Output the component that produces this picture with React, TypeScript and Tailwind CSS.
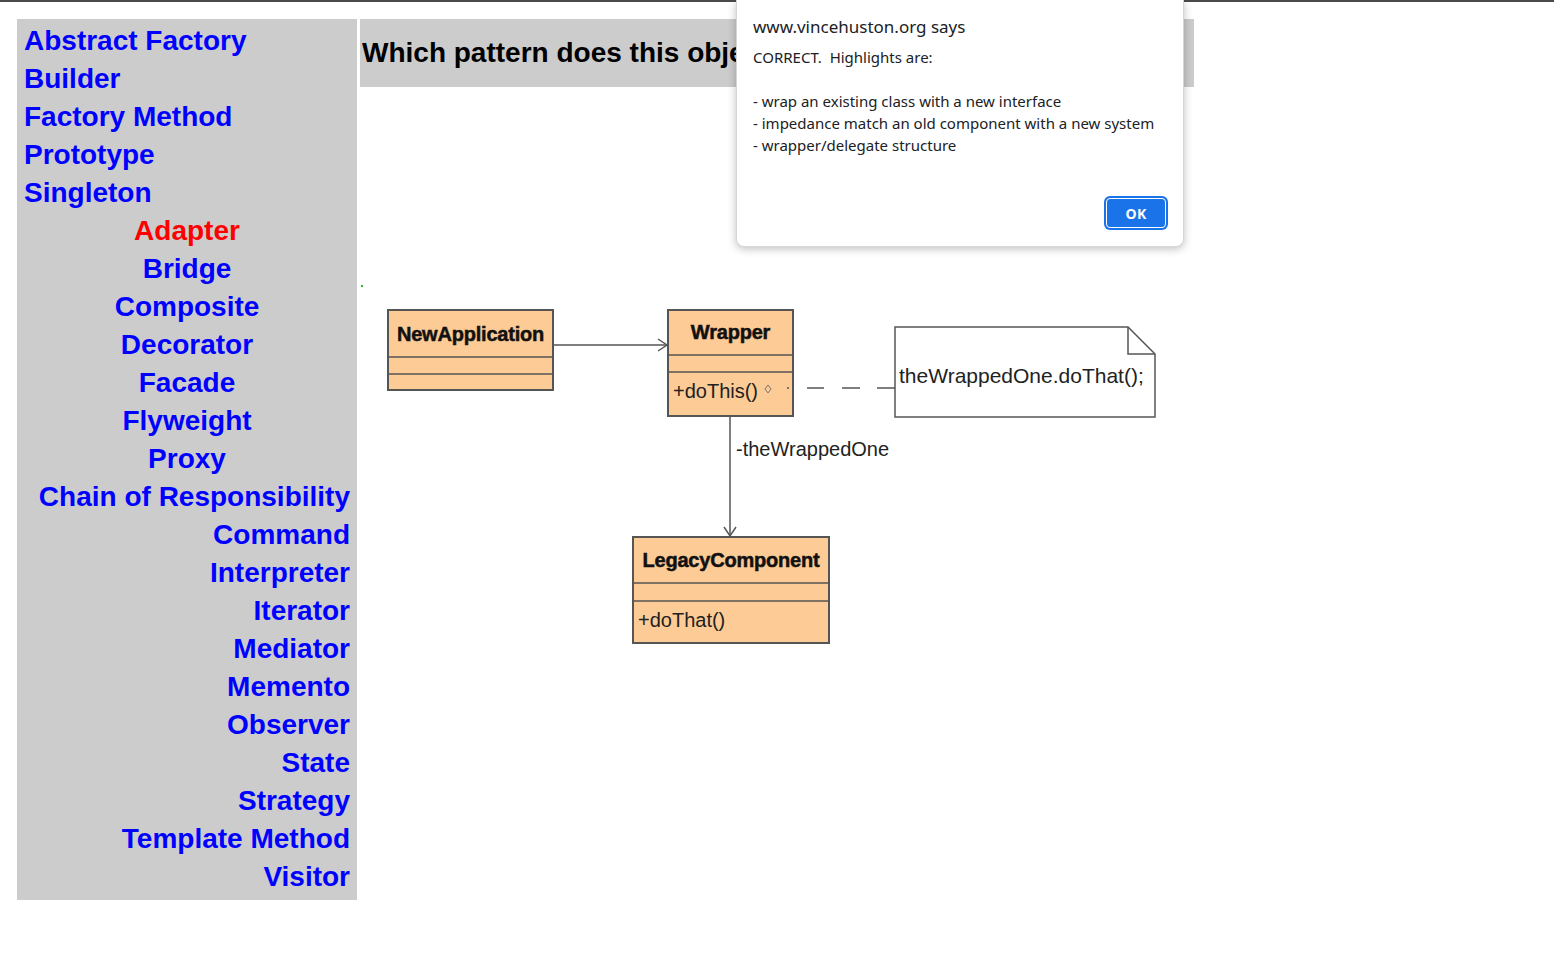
import React from "react";

const creational = ["Abstract Factory", "Builder", "Factory Method", "Prototype", "Singleton"];
const structural = ["Adapter", "Bridge", "Composite", "Decorator", "Facade", "Flyweight", "Proxy"];
const behavioral = [
  "Chain of Responsibility",
  "Command",
  "Interpreter",
  "Iterator",
  "Mediator",
  "Memento",
  "Observer",
  "State",
  "Strategy",
  "Template Method",
  "Visitor",
];

function Sidebar() {
  return (
    <nav className="w-[340px] shrink-0 bg-[#cccccc] px-[7px] pt-[3px] pb-[4px] text-[28px] font-bold leading-[38px]">
      {creational.map((name) => (
        <a key={name} href="#" className="block text-left text-[#0000ff]">
          {name}
        </a>
      ))}
      {structural.map((name) => (
        <a
          key={name}
          href="#"
          className={name === "Adapter" ? "block text-center text-[#ff0000]" : "block text-center text-[#0000ff]"}
        >
          {name}
        </a>
      ))}
      {behavioral.map((name) => (
        <a key={name} href="#" className="block text-right text-[#0000ff]">
          {name}
        </a>
      ))}
    </nav>
  );
}

function ClassBox({
  x,
  y,
  w,
  head,
  mid,
  bottom,
  name,
  method,
}: {
  x: number;
  y: number;
  w: number;
  head: number;
  mid: number;
  bottom: number;
  name: string;
  method?: string;
}) {
  return (
    <g>
      <rect x={x} y={y} width={w} height={bottom - y} fill="#fdcb95" stroke="#555" strokeWidth="2" />
      <line x1={x} y1={head} x2={x + w} y2={head} stroke="#555" strokeWidth="1.5" />
      <line x1={x} y1={mid} x2={x + w} y2={mid} stroke="#555" strokeWidth="1.5" />
      <text
        x={x + w / 2}
        y={head - 16}
        textAnchor="middle"
        fontFamily="'Liberation Sans', Arial, sans-serif"
        fontWeight="bold"
        fontSize="20"
        fill="#111"
        stroke="#111"
        strokeWidth="0.5"
        letterSpacing="-0.2"
      >
        {name}
      </text>
      {method && (
        <text
          x={x + 5}
          y={mid + 26}
          fontFamily="'Liberation Sans', Arial, sans-serif"
          fontSize="20"
          fill="#222"
        >
          {method}
        </text>
      )}
    </g>
  );
}

function Diagram() {
  return (
    <svg width="810" height="370" viewBox="360 283 810 370" className="mt-[196px] block">
      <rect x="361" y="285" width="2" height="2" fill="#2bb52b" />
      <ClassBox x={388} y={310} w={165} head={357} mid={374} bottom={390} name="NewApplication" />
      <ClassBox x={668} y={310} w={125} head={355} mid={372} bottom={416} name="Wrapper" method="+doThis()" />
      <ClassBox x={633} y={537} w={196} head={583} mid={601} bottom={643} name="LegacyComponent" method="+doThat()" />

      <line x1="553" y1="345" x2="667" y2="345" stroke="#555" strokeWidth="1.5" />
      <polyline points="658,339 667,345 658,351" fill="none" stroke="#555" strokeWidth="1.5" />

      <path d="M768 385 L771 389 L768 393 L765 389 Z" fill="none" stroke="#777" strokeWidth="1" />

      <line x1="787" y1="388" x2="789" y2="388" stroke="#555" strokeWidth="1.5" />
      <line x1="807" y1="388" x2="824" y2="388" stroke="#555" strokeWidth="1.5" />
      <line x1="842" y1="388" x2="860" y2="388" stroke="#555" strokeWidth="1.5" />
      <line x1="877" y1="388" x2="895" y2="388" stroke="#555" strokeWidth="1.5" />

      <polygon points="895,327 1128,327 1155,354 1155,417 895,417" fill="#fff" stroke="#555" strokeWidth="1.5" />
      <polyline points="1128,327 1128,354 1155,354" fill="none" stroke="#555" strokeWidth="1.5" />
      <text x="899" y="383" fontFamily="'Liberation Sans', Arial, sans-serif" fontSize="21" fill="#222">
        theWrappedOne.doThat();
      </text>

      <line x1="730" y1="416" x2="730" y2="536" stroke="#555" strokeWidth="1.5" />
      <polyline points="724,527 730,536 736,527" fill="none" stroke="#555" strokeWidth="1.5" />
      <text x="736" y="456" fontFamily="'Liberation Sans', Arial, sans-serif" fontSize="20" fill="#222">
        -theWrappedOne
      </text>
    </svg>
  );
}

function AlertDialog() {
  return (
    <div className="absolute left-[736px] top-[-2px] w-[448px] h-[247px] bg-white rounded-b-lg border border-t-0 border-[#d6d6d6] shadow-[0_2px_8px_rgba(0,0,0,0.25)] px-4 pt-[15px] flex flex-col font-['Noto_Sans','Open_Sans',sans-serif] text-[#202124]">
      <div className="text-[17px] leading-[24px]">www.vincehuston.org says</div>
      <div className="mt-[7px] text-[15px] leading-[22px] whitespace-pre-wrap">
        {"CORRECT.  Highlights are:\n\n- wrap an existing class with a new interface\n- impedance match an old component with a new system\n- wrapper/delegate structure"}
      </div>
      <div className="flex justify-end mt-auto mb-[18px] pr-[1px]">
        <button className="w-[60px] h-[30px] rounded-[4px] bg-[#1a73e8] border border-white ring-2 ring-[#1a73e8] text-white text-[14px] font-bold tracking-wide">
          OK
        </button>
      </div>
    </div>
  );
}

export default function App() {
  return (
    <div className="relative min-h-[956px] bg-white border-t-2 border-[#4a4a4a] font-['Liberation_Sans',Arial,sans-serif]">
      <div className="flex items-start gap-[3px] pl-[17px] pt-[17px]">
        <Sidebar />
        <main className="flex flex-col">
          <div className="w-[834px] h-[68px] bg-[#cccccc] flex items-center pl-[2px]">
            <h1 className="text-[28px] font-bold text-black whitespace-nowrap overflow-hidden">
              Which pattern does this object diagram illustrate?
            </h1>
          </div>
          <Diagram />
        </main>
      </div>
      <AlertDialog />
    </div>
  );
}
